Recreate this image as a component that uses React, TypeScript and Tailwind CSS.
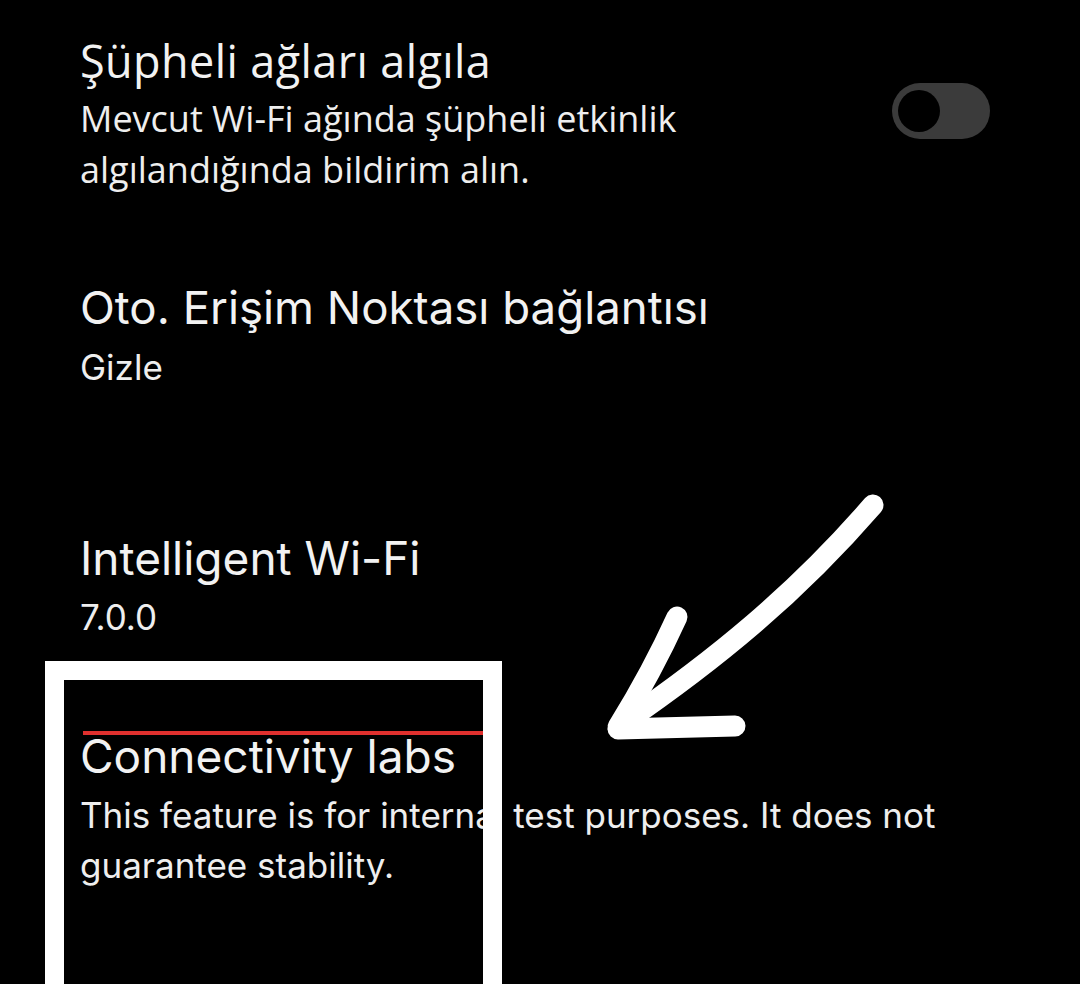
import React from 'react';

const googleish = { fontFamily: 'Inter, "Noto Sans", sans-serif' };

const Toggle = () => (
  <div className="mt-[48px] flex h-[56px] w-[98px] shrink-0 items-center rounded-full bg-[#3b3b3b] pl-[6px]">
    <div className="h-[42px] w-[42px] rounded-full bg-black" />
  </div>
);

const Arrow = () => (
  <svg
    className="pointer-events-none absolute left-0 top-0"
    width="1080"
    height="984"
    viewBox="0 0 1080 984"
    fill="none"
  >
    <g stroke="#ffffff" strokeWidth="21" strokeLinecap="round" strokeLinejoin="round">
      <path d="M873 505 C 795 595, 715 660, 622 724" />
      <path d="M677 617 Q 652 672 618 727" />
      <path d="M618 729 L 735 726" />
    </g>
  </svg>
);

export default function App() {
  return (
    <div className="relative min-h-[984px] w-full overflow-hidden bg-black text-[#eeeeee]">
      <div className="flex flex-col pl-[80px]">
        {/* Şüpheli ağlar */}
        <div
          className="flex items-start justify-between pr-[90px] pt-[35px]"
          style={{ fontFamily: '"Open Sans", Roboto, sans-serif' }}
        >
          <div className="max-w-[640px]">
            <div className="text-[45px] leading-[52px] tracking-[0.4px] text-[#f2f2f2]">Şüpheli ağları algıla</div>
            <div className="mt-[6px] text-[36px] leading-[51px]">
              Mevcut Wi-Fi ağında şüpheli etkinlik algılandığında bildirim alın.
            </div>
          </div>
          <Toggle />
        </div>

        {/* Erişim noktası */}
        <div className="pt-[83px]" style={googleish}>
          <div className="text-[45.6px] leading-[60px] text-[#f2f2f2]">Oto. Erişim Noktası bağlantısı</div>
          <div className="mt-[4px] text-[35px] leading-[50px]">Gizle</div>
        </div>

        {/* Intelligent Wi-Fi */}
        <div className="pt-[136px]" style={googleish}>
          <div className="text-[46px] leading-[60px] text-[#f2f2f2]">Intelligent Wi-Fi</div>
          <div className="mt-[4px] text-[35px] leading-[50px]">7.0.0</div>
        </div>

        {/* Connectivity labs */}
        <div className="pt-[84px]" style={googleish}>
          <div className="text-[46px] leading-[60px] text-[#f2f2f2]">Connectivity labs</div>
          <div className="mt-[4px] max-w-[900px] text-[35px] leading-[50px]">
            This feature is for internal test purposes. It does not guarantee stability.
          </div>
        </div>
      </div>

      {/* red underline mark */}
      <div className="absolute left-[83px] top-[731px] h-[4px] w-[400px] bg-[#e0302e]" />
      {/* highlight box */}
      <div className="absolute left-[45px] top-[661px] h-[360px] w-[457px] border-[19px] border-white" />
      <Arrow />
    </div>
  );
}
